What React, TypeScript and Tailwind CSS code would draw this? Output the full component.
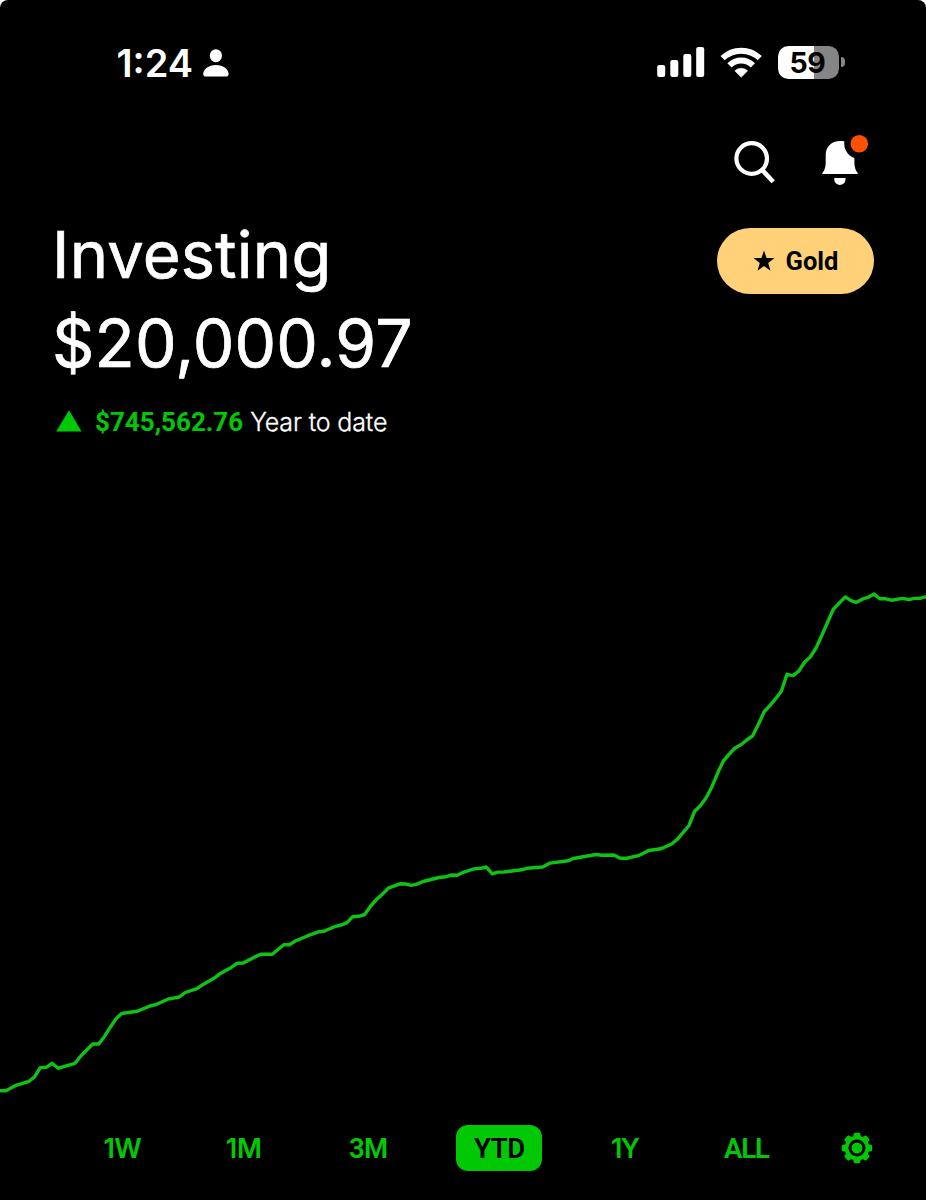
import React from "react";

const points: [number, number][] = [
  [-4, 1090.7], [0, 1090.7], [6, 1090.7], [16, 1085.3], [29, 1081.3], [34.7, 1076.7], [40.3, 1067.6], [46.3, 1067.3],
  [52, 1063.3], [58, 1068.3], [63.7, 1066.7], [75, 1063.3], [81, 1055.7], [92.7, 1044], [98.7, 1044],
  [104.3, 1036.7], [110, 1027.7], [116, 1018.7], [121.7, 1013.5], [137.3, 1011.3], [150, 1006],
  [156.7, 1004.3], [167.7, 999.2], [179.3, 997], [185.3, 992.5], [197, 988.7], [202.7, 984.7],
  [214, 978.3], [220, 973.7], [231.7, 967.2], [237.3, 963.2], [243.3, 963], [254.3, 957.2], [260.7, 954.2],
  [272.3, 954.2], [283.7, 944.7], [289.7, 944.7], [295.3, 941], [306.7, 936.2], [318.3, 931.8],
  [324, 931.2], [335.7, 926.3], [341.3, 925], [347, 922.7], [352.7, 916.7], [358.7, 916.3],
  [364.7, 914.5], [370.7, 906], [376, 900], [382, 894.5], [388.3, 888.2], [400, 883.8], [405.7, 884],
  [411.3, 885.3], [416.7, 884.2], [423, 881.5], [429, 880], [439, 877.5], [446, 876.7], [451.7, 875],
  [457.3, 875.3], [463.3, 872.3], [473.3, 869], [480.7, 868.3], [486.3, 867], [492.3, 873.8],
  [497.7, 872.1], [504, 872], [521.7, 869.8], [527.3, 868.2], [542.7, 867], [550, 863.1],
  [568.3, 860.8], [573.3, 858.5], [596, 854.5], [602, 855.3], [614, 855], [619.7, 858], [625.7, 858.5],
  [639.3, 855.3], [648.7, 850.5], [661, 848.8], [671.7, 844], [677.3, 839.3], [689, 825.5],
  [694.7, 811.2], [700.3, 805.7], [706, 798], [711.7, 787.2], [718, 772.3], [723.3, 761.2],
  [729, 754.3], [735, 748], [741, 744.7], [746.7, 740], [752.5, 736], [758.3, 724.5], [764.3, 711.5],
  [770, 705.3], [775.7, 698.7], [781.3, 691.2], [787, 674.3], [793, 675.7], [798.7, 671.2],
  [804.7, 662], [810.3, 657], [816.3, 647.5], [822, 635], [827.7, 622], [833.3, 609.3],
  [845.3, 596.9], [851, 600.7], [856.3, 602.3], [862.3, 599.2], [868.3, 597.2], [874, 594],
  [879.7, 598.8], [885.7, 598.8], [891.3, 600.2], [902.7, 598.4], [908.7, 599.7], [914.7, 598.4],
  [920.7, 598.2], [930, 595.8],
];

function Person() {
  return (
    <svg className="ml-[10px] h-[28px] w-[26px]" viewBox="0 0 26 28" fill="#fff">
      <ellipse cx="12.9" cy="6.7" rx="6.1" ry="6.5" />
      <path d="M3.2 27.5C1.2 27.5.2 26.5.2 24.9.2 20.7 5.2 16 12.9 16s12.7 4.7 12.7 8.9c0 1.6-1 2.6-3 2.6z" />
    </svg>
  );
}

function Signal() {
  return (
    <svg className="h-[32px] w-[48px]" viewBox="657 46 48 32" fill="#fff">
      <rect x="657.2" y="65" width="8" height="12" rx="2.2" />
      <rect x="670.3" y="60" width="8" height="17" rx="2.2" />
      <rect x="683.3" y="54" width="8" height="23" rx="2.2" />
      <rect x="696.2" y="47" width="8" height="30" rx="2.2" />
    </svg>
  );
}

function Wifi() {
  return (
    <svg className="ml-[15px] h-[32px] w-[42px]" viewBox="720 46 42 32">
      <g fill="none" stroke="#fff" strokeWidth="6">
        <path d="M722.6 58.2a26.7 26.7 0 0 1 37.2 0" />
        <path d="M729.5 65.3a16.8 16.8 0 0 1 23.4 0" />
      </g>
      <path d="M741.2 77.2 734.8 70.8a9.2 9.2 0 0 1 12.8 0z" fill="#fff" stroke="#fff" strokeWidth=".6" strokeLinejoin="round" />
    </svg>
  );
}

function Battery() {
  return (
    <div className="ml-[16px] flex items-center">
      <div className="flex h-[33px] w-[61px] items-center justify-center rounded-[10.5px] bg-[linear-gradient(90deg,#fff_0,#fff_36px,#858585_36px)] pr-[2px] font-[Inter,sans-serif] text-[28.5px] leading-[33px] font-bold tracking-[-0.3px] text-black">
        59
      </div>
      <div className="ml-[2px] h-[10px] w-[4px] rounded-r-full bg-[#858585]" />
    </div>
  );
}

function Bell() {
  return (
    <svg className="ml-[40px] h-[84px] w-[56px]" viewBox="818 126 56 84">
      <path
        d="M822.3 174v-1c2.3-2.6 3.4-6 3.4-10.5v-7.5C825.7 146.8 831.5 141 840 141c1.6 0 3.1.1 4.4.4A15.2 15.2 0 0 0 854.4 158v4.5c0 4.5 1.1 7.9 3.3 10.5v1z"
        fill="#fff"
      />
      <path d="M834.3 178h11.2v1.4a5.6 5.6 0 0 1-11.2 0z" fill="#fff" />
      <circle cx="859.3" cy="143.7" r="8.8" fill="#ff5000" />
    </svg>
  );
}

function Gear() {
  return (
    <svg className="h-[32px] w-[32px]" viewBox="-16 -16 32 32" fill="#00c805">
      {[0, 45, 90, 135].map((a) => (
        <path
          key={a}
          transform={`rotate(${a})`}
          d="M-3.3-14.2Q-3.1-15.2-2.1-15.2H2.1Q3.1-15.2 3.3-14.2L4-10H-4zM-3.3 14.2Q-3.1 15.2-2.1 15.2H2.1Q3.1 15.2 3.3 14.2L4 10H-4z"
        />
      ))}
      <circle r="10.4" fill="none" stroke="#00c805" strokeWidth="3.8" />
      <circle r="5.5" />
    </svg>
  );
}

export default function App() {
  return (
    <div className="h-[1200px] w-[926px] overflow-hidden bg-white">
      <div className="flex h-full flex-col rounded-t-[8px] bg-black font-[Inter,sans-serif] text-white">
        <div className="flex h-[126px] items-center justify-between pr-[81px] pl-[116.5px]">
          <div className="flex items-center">
            <span className="text-[38px] leading-[40px] font-semibold">1:24</span>
            <Person />
          </div>
          <div className="-mt-[2px] flex items-center">
            <Signal />
            <Wifi />
            <Battery />
          </div>
        </div>

        <div className="flex h-[84px] justify-end pr-[52px]">
          <svg className="h-[84px] w-[48px]" viewBox="730 126 48 84" fill="none" stroke="#fff">
            <circle cx="751.7" cy="158.5" r="15.3" strokeWidth="4.2" />
            <path d="M761.8 169.6 773.2 181.8" strokeWidth="4.6" />
          </svg>
          <Bell />
        </div>

        <div className="flex h-[177px] items-start justify-between pr-[52px] pl-[52px]">
          <div className="pt-px">
            <h1 className="text-[65px] leading-[88px] font-normal tracking-[0.2px] [-webkit-text-stroke:0.7px_white]">Investing</h1>
            <div className="text-[66px] leading-[88px] font-normal tracking-[0.2px] [-webkit-text-stroke:0.7px_white]">$20,000.97</div>
          </div>
          <button className="mt-[18px] flex h-[66px] w-[157px] items-center justify-center rounded-full bg-[#ffd27a] text-black">
            <svg className="h-[22px] w-[22px]" viewBox="0 0 22 22">
              <path d="M11 .5 13.6 8.1H21.5L15.2 12.9 17.5 20.7 11 16.100 4.500 20.7 6.8 12.9.5 8.1H8.4z" />
            </svg>
            <span className="ml-[11px] font-[Roboto,sans-serif] text-[25.5px] leading-[30px] font-bold">Gold</span>
          </button>
        </div>

        <div className="flex h-[69px] items-center pl-[56px]">
          <svg className="-mt-px h-[22px] w-[26px]" viewBox="0 0 26 22" fill="#00c805">
            <path d="M13 .3 25.6 21.6H.2z" />
          </svg>
          <span className="ml-[13px] font-[Roboto,sans-serif] text-[26px] leading-[32px] font-bold text-[#00c805]">$745,562.76</span>
          <span className="ml-[7px] text-[25px] leading-[32px] font-light tracking-[-0.15px] [-webkit-text-stroke:0.3px_white]">Year to date</span>
        </div>

        <svg className="h-[665px] w-full" viewBox="0 456 926 665" fill="none">
          <polyline
            points={points.map((p) => p.join(",")).join(" ")}
            stroke="#0fc314"
            strokeWidth="3.4"
            strokeLinejoin="round"
          />
        </svg>

        <div className="grid h-[54px] grid-cols-[119.4px_123.8px_125px_137.6px_113px_130px_91.5px] items-center justify-items-center pl-[62.5px] font-[Roboto,sans-serif] text-[27.5px] leading-[46px] font-semibold text-[#00c805]">
          <span className="pt-[2px] font-[Inter,sans-serif] text-[27px] tracking-[-0.8px]">1W</span>
          <span className="pt-[2px] font-[Inter,sans-serif] text-[27px]">1M</span>
          <span className="pt-[2px] tracking-[-0.6px]">3M</span>
          <span className="flex h-[46px] w-[86px] items-center justify-center rounded-[12px] bg-[#00c805] pt-[2px] tracking-[-0.4px] text-black">
            YTD
          </span>
          <span className="pt-[2px] font-[Inter,sans-serif] text-[27px] tracking-[-1.5px]">1Y</span>
          <span className="pt-[2px] tracking-[-1.1px]">ALL</span>
          <Gear />
        </div>
      </div>
    </div>
  );
}
